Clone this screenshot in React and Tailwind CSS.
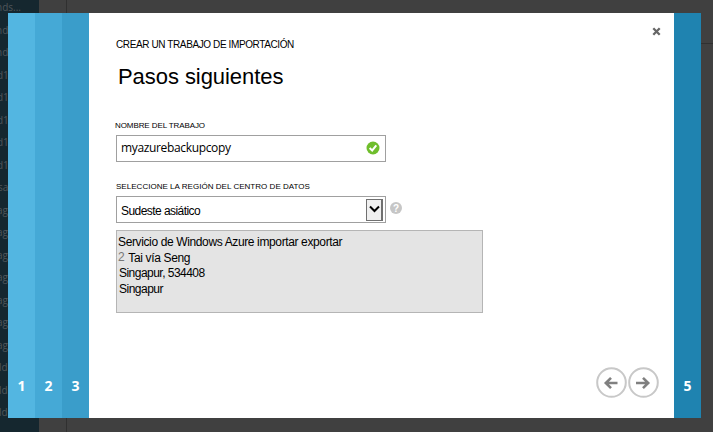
const sidebarItems = [
  "nds...", "nd", "nd", "d1", "d1", "d1", "d1", "d1", "sa", "ag",
  "ag", "ag", "ag", "ag", "ag", "ag", "ld", "ld", "ld",
];

const sidebarIndent = {
  n: "-ml-[4px]",
  d: "-ml-[3px]",
  s: "-ml-[2px]",
  a: "-ml-[3px]",
  l: "-ml-px",
};

const doneSteps = [
  { n: 1, bg: "bg-[#53b6e1]" },
  { n: 2, bg: "bg-[#45a9d6]" },
  { n: 3, bg: "bg-[#3a9dca]" },
];

function Step({ n, bg }) {
  return (
    <div className={`flex w-[27px] shrink-0 items-end justify-center pb-[22px] font-['Open_Sans',sans-serif] text-[14px] leading-[20px] font-bold text-white ${bg}`}>
      {n}
    </div>
  );
}

function CircleButton({ label, path }) {
  return (
    <button aria-label={label} className="size-[31px]">
      <svg viewBox="0 0 31 31" className="size-[31px]" fill="none">
        <circle cx="15.5" cy="15.5" r="14.3" stroke="#c8c8c8" strokeWidth="2" />
        <path d={path} stroke="#808080" strokeWidth="2.6" />
      </svg>
    </button>
  );
}

function Backdrop() {
  return (
    <div className="flex h-full">
      <nav className="w-[39px] shrink-0 overflow-hidden bg-[#15272f] font-['Open_Sans',sans-serif] text-[10px] text-[#50565a]">
        <ul className="-mt-[4px]">
          {sidebarItems.map((item, i) => (
            <li key={i} className={`h-[22.5px] leading-[23px] ${sidebarIndent[item[0]]}`}>{item}</li>
          ))}
        </ul>
      </nav>
      <div className="w-[28px] shrink-0 border-r border-[#303030]" />
      <div className="h-[44px] grow border-b border-[#303030]" />
    </div>
  );
}

function Dialog() {
  return (
    <div className="absolute top-[13px] left-[8px] flex h-[405px] w-[693px] bg-white">
      {doneSteps.map((s) => <Step key={s.n} {...s} />)}
      <main className="flex w-[585px] flex-col pl-[27px]">
        <header className="flex h-[94px] justify-between pr-[13px]">
          <div>
            <p className="mt-[25px] text-[10px] leading-[14px] tracking-[-0.39px]">CREAR UN TRABAJO DE IMPORTACIÓN</p>
            <h1 className="mt-[12px] ml-[2px] text-[22px] leading-[26px] tracking-[-0.06px]">Pasos siguientes</h1>
          </div>
          <button aria-label="Cerrar" className="mt-[14px] size-[9px]">
            <svg viewBox="0 0 9 9" className="size-[9px]">
              <path d="M1.3 1.3L7.7 7.7M7.7 1.3L1.3 7.7" stroke="#666" strokeWidth="2.3" />
            </svg>
          </button>
        </header>
        <label className="mt-[12px] -ml-px h-[16px] text-[8px] leading-[13px] tracking-[-0.09px] whitespace-nowrap">NOMBRE DEL TRABAJO</label>
        <div className="flex h-[27px] w-[270px] items-center justify-between border border-[#a0a0a0] pr-[5px] pl-[4px]">
          <span className="-mt-[2px] font-['Open_Sans',sans-serif] text-[12px] tracking-[-0.35px]">myazurebackupcopy</span>
          <svg viewBox="0 0 14 14" className="-mt-px size-[14px]">
            <circle cx="7" cy="7" r="6.5" fill="#6fbe2c" />
            <path d="M3.6 7L6.2 9.5L10.3 4.4" fill="none" stroke="#fff" strokeWidth="2" />
          </svg>
        </div>
        <label className="mt-[18px] h-[16px] text-[8px] leading-[13px] tracking-[0.03px] whitespace-nowrap">SELECCIONE LA REGIÓN DEL CENTRO DE DATOS</label>
        <div className="flex items-center gap-[4px]">
          <div className="flex h-[27px] w-[270px] items-center justify-between border border-[#a0a0a0] pr-[2px] pl-[4px]">
            <span className="mt-[3px] text-[12px] tracking-[-0.56px]">Sudeste asiático</span>
            <span className="flex h-[22px] w-[17px] items-center justify-center border border-r-2 border-[#707070] bg-[#f0f0f0]">
              <svg viewBox="0 0 11 8" className="-mt-[2px] h-[8px] w-[11px]" fill="none">
                <path d="M1 1.5L5.5 6L10 1.5" stroke="#000" strokeWidth="2" />
              </svg>
            </span>
          </div>
          <span className="-mt-[3px] flex size-[12px] items-center justify-center rounded-full bg-[#c6c6c6] text-[10px] font-bold text-white">?</span>
        </div>
        <address className="mt-[7px] h-[83px] w-[367px] border border-[#b5b5b5] bg-[#e4e4e4] pt-[4px] pl-[2px] text-[12px] leading-[15.6px] not-italic">
          <p className="-ml-px tracking-[-0.37px]">Servicio de Windows Azure importar exportar</p>
          <p className="-ml-px tracking-[-0.35px]"><span className="relative -top-px text-[#777]">2</span> <span className="ml-px">Tai vía Seng</span></p>
          <p className="tracking-[-0.53px]">Singapur, 534408</p>
          <p className="tracking-[-0.5px]">Singapur</p>
        </address>
        <footer className="mt-auto mb-[20px] flex justify-end gap-px pr-[15px]">
          <CircleButton label="Anterior" path="M21.5 16H10.5M15 10.8L9.8 16L15 21.2" />
          <CircleButton label="Siguiente" path="M8 16H20M15 10.8L20.2 16L15 21.2" />
        </footer>
      </main>
      <Step n={5} bg="bg-[#1f83b0]" />
    </div>
  );
}

export default function App() {
  return (
    <div className="relative h-[432px] w-[713px] overflow-hidden bg-[#404040] font-['Liberation_Sans',Arial,sans-serif] text-black">
      <Backdrop />
      <Dialog />
    </div>
  );
}
